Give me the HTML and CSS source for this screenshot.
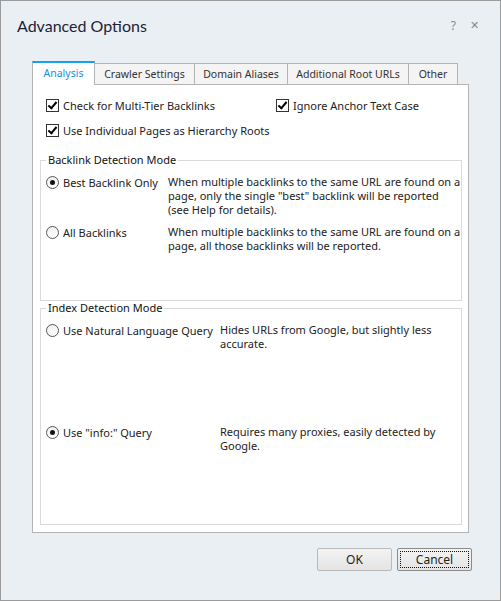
FILE: index.html
```html
<!DOCTYPE html>
<html lang="en">
<head>
  <meta charset="UTF-8">
  <title>Advanced Options</title>
  <link rel="stylesheet" href="styles.css">
</head>
<body>
  <div class="window">
    <div class="titlebar">
      <div class="title">Advanced Options</div>
      <div class="title-buttons">
        <span class="help">?</span>
        <span class="close">&#x2715;</span>
      </div>
    </div>

    <div class="tabs">
      <div class="tab tab-analysis active">Analysis</div>
      <div class="tab tab-crawler">Crawler Settings</div>
      <div class="tab tab-domain">Domain Aliases</div>
      <div class="tab tab-roots">Additional Root URLs</div>
      <div class="tab tab-other">Other</div>
    </div>

    <div class="panel">
      <div class="checks">
        <div class="check-row">
          <label class="check wide"><span class="box on"></span>Check for Multi-Tier Backlinks</label>
          <label class="check"><span class="box on"></span>Ignore Anchor Text Case</label>
        </div>
        <div class="check-row">
          <label class="check"><span class="box on"></span>Use Individual Pages as Hierarchy Roots</label>
        </div>
      </div>

      <fieldset class="group group-backlink">
        <legend>Backlink Detection Mode</legend>
        <div class="option">
          <label class="radio"><span class="dot on"></span>Best Backlink Only</label>
          <div class="desc">When multiple backlinks to the same URL are found on a<br>page, only the single "best" backlink will be reported<br>(see Help for details).</div>
        </div>
        <div class="option">
          <label class="radio"><span class="dot"></span>All Backlinks</label>
          <div class="desc">When multiple backlinks to the same URL are found on a<br>page, all those backlinks will be reported.</div>
        </div>
      </fieldset>

      <fieldset class="group group-index">
        <legend>Index Detection Mode</legend>
        <div class="option option-natural">
          <label class="radio"><span class="dot"></span>Use Natural Language Query</label>
          <div class="desc">Hides URLs from Google, but slightly less<br>accurate.</div>
        </div>
        <div class="option">
          <label class="radio"><span class="dot on"></span>Use "info:" Query</label>
          <div class="desc">Requires many proxies, easily detected by<br>Google.</div>
        </div>
      </fieldset>
    </div>

    <div class="buttons">
      <button class="btn">OK</button>
      <button class="btn focused"><span>Cancel</span></button>
    </div>
  </div>
</body>
</html>
```

FILE: styles.css
```css
body {
  margin: 0;
  font-family: "Noto Sans", "Liberation Sans", sans-serif;
  font-size: 11px;
  color: #000;
  background: #eaeff4;
}
.window {
  width: 501px;
  height: 601px;
  box-sizing: border-box;
  border: 1px solid #9b9b9b;
  background: #eaeff4;
}
.titlebar {
  display: flex;
  justify-content: space-between;
  align-items: center;
  height: 49px;
  padding: 0 21px 0 16px;
}
.title {
  font-family: Lato, "Noto Sans", sans-serif;
  font-size: 16px;
  color: #1b2336;
}
.title-buttons {
  display: flex;
  gap: 14px;
  color: #8a8a8a;
  font-size: 12px;
}
.close {
  font-size: 11px;
}
.tabs {
  display: flex;
  align-items: flex-end;
  height: 34px;
  margin-left: 31px;
  white-space: nowrap;
}
.tab {
  box-sizing: border-box;
  height: 21px;
  line-height: 20px;
  text-align: center;
  background: #f4f4f4;
  border: 1px solid #b4b4b4;
  border-bottom: none;
  margin-left: -1px;
  color: #333;
  font-size: 10.5px;
}
.tab-analysis { width: 63px; margin-left: 0; }
.tab-crawler { width: 101px; }
.tab-domain { width: 94px; }
.tab-roots { width: 122px; }
.tab-other { width: 50px; }
.tab.active {
  position: relative;
  z-index: 1;
  height: 24px;
  line-height: 21px;
  background: #fff;
  color: #1a8fe0;
  border-top: 2px solid #17a0ef;
  margin-bottom: -1px;
}
.panel {
  width: 437px;
  height: 449px;
  margin-left: 31px;
  box-sizing: border-box;
  background: #fff;
  border: 1px solid #b4b4b4;
  padding: 0 6px 0 7px;
}
.checks {
  box-sizing: border-box;
  height: 68px;
  padding: 8px 0 0 6px;
}
.check-row {
  display: flex;
  height: 25px;
  align-items: center;
}
.check {
  display: flex;
  align-items: center;
  color: #222;
}
.check.wide {
  width: 230px;
}
.box {
  width: 11px;
  height: 11px;
  border: 1px solid #333;
  margin-right: 4px;
  position: relative;
}
.box.on::after {
  content: "";
  position: absolute;
  left: 3px;
  top: 0px;
  width: 3px;
  height: 7px;
  border: solid #000;
  border-width: 0 2px 2px 0;
  transform: rotate(40deg);
}
.group {
  margin: 0;
  padding: 0 0 0 5px;
  border: 1px solid #dadada;
  box-sizing: border-box;
}
.group legend {
  padding: 0 2px;
  margin-left: 0;
  line-height: 14px;
  color: #111;
}
.group-backlink {
  height: 148px;
}
.group-index {
  height: 224px;
}
.option {
  display: flex;
  align-items: flex-start;
  height: 50px;
}
.option:first-of-type {
  margin-top: 8px;
}
.group-index .option-natural {
  height: 102px;
}
.radio {
  display: flex;
  align-items: center;
  width: 122px;
  height: 14px;
  color: #222;
  white-space: nowrap;
}
.group-index .radio {
  width: 174px;
}
.dot {
  width: 11px;
  height: 11px;
  border: 1px solid #555;
  border-radius: 50%;
  margin-right: 4px;
  position: relative;
  background: linear-gradient(#f0f0f0, #fff);
}
.dot.on::after {
  content: "";
  position: absolute;
  left: 3px;
  top: 3px;
  width: 5px;
  height: 5px;
  border-radius: 50%;
  background: #111;
}
.desc {
  line-height: 14px;
  color: #222;
  white-space: nowrap;
}
.buttons {
  display: flex;
  justify-content: flex-end;
  gap: 5px;
  padding: 15px 28px 0 0;
}
.btn {
  width: 75px;
  height: 23px;
  font-family: inherit;
  font-size: 12px;
  color: #222;
  background: linear-gradient(#f3f3f3, #e4e4e4);
  border: 1px solid #b9b9b9;
  border-radius: 2px;
  padding: 0;
}
.btn.focused {
  border-color: #8b8b8b;
  padding: 2px;
}
.btn.focused span {
  display: block;
  height: 100%;
  line-height: 15px;
  box-sizing: border-box;
  border: 1px dotted #111;
}
```
